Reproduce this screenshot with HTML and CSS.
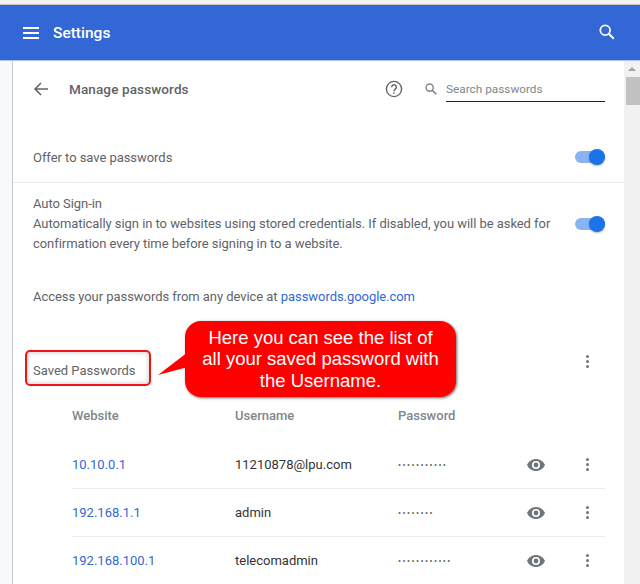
FILE: index.html
```html
<!DOCTYPE html>
<html lang="en">
<head>
    <meta charset="UTF-8">
    <meta name="viewport" content="width=device-width, initial-scale=1.0">
    <title>Settings - Manage passwords</title>
    <link rel="stylesheet" href="styles.css">
</head>
<body>
    <div class="top-strip"></div>

    <!-- Blue settings toolbar -->
    <header class="toolbar">
        <div class="toolbar-left">
            <svg class="menu-icon" viewBox="0 0 16 12" width="16" height="12"><path d="M0 0h16v2H0zM0 5h16v2H0zM0 10h16v2H0z" fill="#fff"/></svg>
            <span class="toolbar-title">Settings</span>
        </div>
        <svg class="toolbar-search" viewBox="0 0 16 16" width="16" height="16"><circle cx="6.2" cy="6.2" r="4.9" fill="none" stroke="#fff" stroke-width="1.7"/><path d="M9.8 9.8l5 5" stroke="#fff" stroke-width="2" fill="none"/></svg>
    </header>

    <div class="main">
        <div class="side"></div>
        <div class="card">
            <div class="page-head">
                <div class="page-head-left">
                    <svg class="back-icon" viewBox="0 0 16 16" width="16" height="16"><path d="M15 8H2M8 2L2 8l6 6" fill="none" stroke="#5f6368" stroke-width="1.5"/></svg>
                    <span class="page-title">Manage passwords</span>
                </div>
                <svg class="help-icon" viewBox="0 0 18 18" width="18" height="18"><circle cx="9" cy="9" r="7.6" fill="none" stroke="#5f6368" stroke-width="1.4"/><path d="M6.6 7.2a2.4 2.4 0 1 1 3.7 2c-.9.6-1.3 1-1.3 2" fill="none" stroke="#5f6368" stroke-width="1.4"/><path d="M8.3 12.3h1.4v1.4H8.3z" fill="#5f6368"/></svg>
                <div class="search-box">
                    <svg viewBox="0 0 13 13" width="12" height="12"><circle cx="5" cy="5" r="3.9" fill="none" stroke="#80868b" stroke-width="1.5"/><path d="M8 8l4.2 4.2" stroke="#80868b" stroke-width="1.8" fill="none"/></svg>
                    <span class="search-input">Search passwords</span>
                </div>
            </div>

            <div class="offer-row">
                <span>Offer to save passwords</span>
                <div class="toggle"><div class="toggle-knob"></div></div>
            </div>

            <div class="signin-row">
                <div class="signin-text">
                    <div>Auto Sign-in</div>
                    <div>Automatically sign in to websites using stored credentials. If disabled, you will be asked for confirmation every time before signing in to a website.</div>
                </div>
                <div class="toggle"><div class="toggle-knob"></div></div>
            </div>

            <p class="access-line">Access your passwords from any device at <a href="#">passwords.google.com</a></p>

            <div class="saved-head">
                <span class="saved-label">Saved Passwords</span>
                <div class="dots saved-dots"><i></i><i></i><i></i></div>
            </div>

            <!-- Saved password list -->
            <div class="list-head">
                <span class="col-site">Website</span>
                <span class="col-user">Username</span>
                <span class="col-pass">Password</span>
            </div>
            <div class="list-row">
                <a class="col-site" href="#">10.10.0.1</a>
                <span class="col-user">11210878@lpu.com</span>
                <span class="col-pass pass-dots">•••••••••••</span>
                <svg class="eye" viewBox="0 0 18 12" width="18" height="12"><path d="M9 0C5 0 1.600 2.500 0 6c1.600 3.500 5 6 9 6s7.400-2.500 9-6c-1.600-3.500-5-6-9-6zm0 10a4 4 0 1 1 0-8 4 4 0 0 1 0 8zm0-6.400a2.400 2.400 0 1 0 0 4.800 2.400 2.400 0 0 0 0-4.800z" fill="#70757a"/></svg>
                <div class="dots"><i></i><i></i><i></i></div>
            </div>
            <div class="list-row">
                <a class="col-site" href="#">192.168.1.1</a>
                <span class="col-user">admin</span>
                <span class="col-pass pass-dots">••••••••</span>
                <svg class="eye" viewBox="0 0 18 12" width="18" height="12"><path d="M9 0C5 0 1.600 2.500 0 6c1.600 3.500 5 6 9 6s7.400-2.500 9-6c-1.600-3.500-5-6-9-6zm0 10a4 4 0 1 1 0-8 4 4 0 0 1 0 8zm0-6.400a2.400 2.400 0 1 0 0 4.800 2.400 2.400 0 0 0 0-4.800z" fill="#70757a"/></svg>
                <div class="dots"><i></i><i></i><i></i></div>
            </div>
            <div class="list-row">
                <a class="col-site" href="#">192.168.100.1</a>
                <span class="col-user">telecomadmin</span>
                <span class="col-pass pass-dots">••••••••••••</span>
                <svg class="eye" viewBox="0 0 18 12" width="18" height="12"><path d="M9 0C5 0 1.600 2.500 0 6c1.600 3.500 5 6 9 6s7.400-2.500 9-6c-1.600-3.500-5-6-9-6zm0 10a4 4 0 1 1 0-8 4 4 0 0 1 0 8zm0-6.400a2.400 2.400 0 1 0 0 4.800 2.400 2.400 0 0 0 0-4.800z" fill="#70757a"/></svg>
                <div class="dots"><i></i><i></i><i></i></div>
            </div>
        </div>

        <div class="scrollbar">
            <div class="scroll-arrow"></div>
            <div class="scroll-thumb"></div>
        </div>
    </div>

    <!-- Annotation drawn over the screenshot -->
    <div class="callout">
        <svg class="callout-tail" viewBox="0 0 30 26" width="30" height="26"><path d="M30 3L0 26l30-8z" fill="#ff0000"/></svg>
        <span>Here you can see the list of<br>all your saved password with<br>the Username.</span>
    </div>
</body>
</html>
```

FILE: styles.css
```css
body {
    font-family: Roboto, Arial, sans-serif;
    font-size: 13px;
    color: #5f6368;
    background-color: #fff;
    margin: 0;
    width: 640px;
    height: 584px;
    overflow: hidden;
    position: relative;
    display: flex;
    flex-direction: column;
}

a {
    color: #3367d6;
    text-decoration: none;
}

.top-strip {
    height: 4px;
    background-color: #f1f1f1;
    border-bottom: 1px solid #c4c4c4;
}

.toolbar {
    height: 56px;
    flex-shrink: 0;
    background-color: #3367d6;
    border-bottom: 1px solid #a9c2ee;
    box-sizing: border-box;
    display: flex;
    justify-content: space-between;
    align-items: center;
    padding: 0 25px 0 23px;
}

.toolbar-left {
    display: flex;
    align-items: center;
    gap: 14px;
}

.toolbar-title {
    color: #fff;
    font-size: 15.500px;
    font-weight: 500;
}

.toolbar-search {
    margin-bottom: 1px;
}

.main {
    flex: 1;
    display: flex;
    min-height: 0;
}

.side {
    width: 12px;
    background-color: #f8f9fa;
    border-right: 1px solid #c8c8c8;
}

.card {
    flex: 1;
    min-width: 0;
}

.page-head {
    height: 56px;
    display: flex;
    align-items: center;
    padding: 0 19px 0 20px;
}

.page-head-left {
    display: flex;
    align-items: center;
    gap: 20px;
    flex: 1;
}

.page-title {
    font-size: 13.500px;
    font-weight: 500;
    letter-spacing: 0.120px;
}

.help-icon {
    margin-right: 22px;
}

.search-box {
    display: flex;
    align-items: center;
    gap: 9px;
}

.search-input {
    width: 159px;
    height: 25px;
    box-sizing: border-box;
    border-bottom: 1px solid #202124;
    color: #80868b;
    font-size: 11.800px;
    line-height: 24px;
}

.offer-row {
    height: 50px;
    margin-top: 15px;
    display: flex;
    justify-content: space-between;
    align-items: center;
    padding: 0 19px 0 20px;
    border-bottom: 1px solid #ebebeb;
    letter-spacing: -0.050px;
}

.toggle {
    width: 30px;
    height: 12px;
    flex-shrink: 0;
    background-color: #8ab4f0;
    border-radius: 6px;
    position: relative;
}

.toggle-knob {
    position: absolute;
    right: 0;
    top: -2px;
    width: 16px;
    height: 16px;
    border-radius: 50%;
    background-color: #1a73e8;
    box-shadow: 0 1px 2px rgba(0, 0, 0, 0.3);
}

.signin-row {
    display: flex;
    justify-content: space-between;
    align-items: center;
    padding: 11px 19px 9px 20px;
    line-height: 20px;
    letter-spacing: -0.054px;
}

.signin-text {
    width: 530px;
}

.access-line {
    margin: 24px 20px 0;
    line-height: 20px;
    letter-spacing: -0.054px;
}

.saved-head {
    display: flex;
    justify-content: space-between;
    align-items: flex-start;
    padding: 0 19px 0 20px;
    margin-top: 33px;
    height: 66px;
}

.saved-label {
    margin-top: 22px;
    line-height: 18px;
    position: relative;
}

/* red highlight around the section label */
.saved-label::before {
    content: "";
    position: absolute;
    left: -8px;
    top: -12px;
    width: 122px;
    height: 32px;
    border: 2px solid #f01414;
    border-radius: 5px;
    box-shadow: inset 0 0 5px rgba(0, 0, 0, 0.25);
}

.dots {
    width: 3px;
    display: flex;
    flex-direction: column;
    gap: 2px;
    margin-left: 41px;
}

.saved-dots {
    margin-top: 15px;
    margin-right: 16px;
}

.dots i {
    width: 3px;
    height: 3px;
    border-radius: 50%;
    background-color: #70757a;
}

.list-head {
    height: 35px;
    display: flex;
    align-items: flex-start;
    margin: 0 19px 0 59px;
    color: #80868b;
    font-weight: 500;
    line-height: 20px;
}

.list-row {
    height: 48px;
    box-sizing: border-box;
    display: flex;
    align-items: center;
    margin: 0 19px 0 59px;
    border-bottom: 1px solid #ebebeb;
    color: #333;
}

.col-site {
    width: 163px;
}

.col-user {
    width: 163px;
}

.col-pass {
    width: 129px;
}

.pass-dots {
    font-size: 9px;
    letter-spacing: 1.450px;
    color: #5f6368;
}

.eye {
    flex-shrink: 0;
}

.scrollbar {
    width: 16px;
    background-color: #f1f1f1;
    flex-shrink: 0;
    padding-top: 6px;
}

.scroll-arrow {
    width: 0;
    height: 0;
    margin: 0 auto 6px;
    border-left: 4px solid transparent;
    border-right: 4px solid transparent;
    border-bottom: 4px solid #a3a3a3;
}

.scroll-thumb {
    width: 14px;
    height: 28px;
    margin-left: 2px;
    background-color: #c1c1c1;
}

.callout {
    position: absolute;
    left: 185px;
    top: 321px;
    width: 271px;
    height: 76px;
    background-color: #ff0000;
    border-radius: 16px;
    box-shadow: 1px 1px 3px rgba(0, 0, 0, 0.6);
    color: #fff;
    font-family: "Liberation Sans", Arial, sans-serif;
    font-size: 18.500px;
    line-height: 21.500px;
    text-align: center;
    display: flex;
    align-items: center;
    justify-content: center;
}

.callout-tail {
    position: absolute;
    left: -27px;
    top: 28px;
}
```
